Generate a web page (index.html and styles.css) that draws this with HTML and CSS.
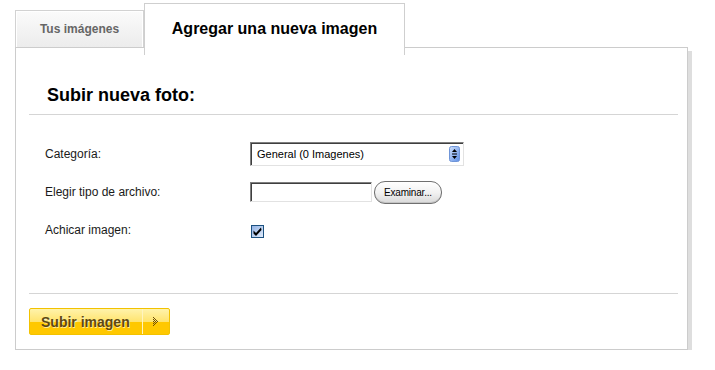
FILE: index.html
```html
<!DOCTYPE html>
<html lang="es">
<head>
    <meta charset="UTF-8">
    <title>Agregar una nueva imagen</title>
    <link rel="stylesheet" href="styles.css">
</head>
<body>

<div class="wrapper">
    <div class="tabs">
        <div class="tab">Tus imágenes</div>
        <div class="tab active">Agregar una nueva imagen</div>
    </div>

    <div class="panel">
        <h2 class="title">Subir nueva foto:</h2>

        <div class="form">
            <div class="row">
                <span class="label">Categoría:</span>
                <div class="select">
                    <span>General (0 Imagenes)</span>
                    <svg class="spin" width="11" height="16" viewBox="0 0 11 16">
                        <defs>
                            <linearGradient id="sg" x1="0" y1="0" x2="1" y2="1">
                                <stop offset="0" stop-color="#cfe0fb"/>
                                <stop offset="1" stop-color="#5d8ee6"/>
                            </linearGradient>
                        </defs>
                        <rect x="0.5" y="0.5" width="10" height="15" rx="2" fill="url(#sg)" stroke="#6f95d8"/>
                        <path d="M5.5 3 L8 6 L3 6 Z" fill="#000"/>
                        <rect x="3" y="7.5" width="5" height="1" fill="#000"/>
                        <path d="M3 10 L8 10 L5.5 13 Z" fill="#000"/>
                    </svg>
                </div>
            </div>
            <div class="row">
                <span class="label">Elegir tipo de archivo:</span>
                <div class="file-box"></div>
                <span class="browse">Examinar...</span>
            </div>
            <div class="row">
                <span class="label">Achicar imagen:</span>
                <svg class="check" width="13" height="13" viewBox="0 0 13 13">
                    <defs>
                        <linearGradient id="cg" x1="0" y1="0" x2="1" y2="1">
                            <stop offset="0" stop-color="#8fb0e4"/>
                            <stop offset="1" stop-color="#e4eefb"/>
                        </linearGradient>
                    </defs>
                    <rect x="0.5" y="0.5" width="12" height="12" fill="url(#cg)" stroke="#1c5180"/>
                    <path d="M2.5 5.5 L5 8 L10 2.5 L10.5 5 L5 11 L2.5 8.5 Z" fill="#000"/>
                </svg>
            </div>
        </div>

        <div class="footer">
            <button class="submit">
                <span class="submit-text">Subir imagen</span>
                <span class="submit-arrow">
                    <svg width="5" height="9" viewBox="0 0 5 9">
                        <rect x="0" y="0" width="1" height="1"/><rect x="0" y="2" width="1" height="1"/>
                        <rect x="0" y="4" width="1" height="1"/><rect x="0" y="6" width="1" height="1"/>
                        <rect x="0" y="8" width="1" height="1"/><rect x="1" y="1" width="1" height="1"/>
                        <rect x="1" y="3" width="1" height="1"/><rect x="1" y="5" width="1" height="1"/>
                        <rect x="1" y="7" width="1" height="1"/><rect x="2" y="2" width="1" height="1"/>
                        <rect x="2" y="4" width="1" height="1"/><rect x="2" y="6" width="1" height="1"/>
                        <rect x="3" y="3" width="1" height="1"/><rect x="3" y="5" width="1" height="1"/>
                        <rect x="4" y="4" width="1" height="1"/>
                    </svg>
                </span>
            </button>
        </div>
    </div>
</div>

</body>
</html>
```

FILE: styles.css
```css
body {
    margin: 0;
    background-color: #fff;
    font-family: "Liberation Sans", Arial, sans-serif;
    color: #1a1a1a;
}
.wrapper {
    width: 673px;
    margin-left: 15px;
    padding-top: 3px;
}
.tabs {
    display: flex;
    align-items: flex-start;
}
.tab {
    box-sizing: border-box;
    width: 129px;
    height: 37px;
    margin-top: 7px;
    padding-top: 11px;
    border: 1px solid #d2d2d2;
    border-bottom: none;
    box-shadow: inset 1px 1px 0 #fff, inset -1px 0 0 #fff;
    background: linear-gradient(#fbfbfb, #ececec);
    color: #666;
    font-size: 12px;
    font-weight: bold;
    line-height: 14px;
    text-align: center;
}
.tab.active {
    position: relative;
    z-index: 1;
    width: 261px;
    height: 52px;
    margin-top: 0;
    margin-bottom: -8px;
    padding-top: 16px;
    border-color: #cfcfcf;
    box-shadow: none;
    background: #fff;
    color: #000;
    font-size: 16px;
    line-height: 18px;
}
.panel {
    border: 1px solid #cccccc;
    box-shadow: 4px 4px 0 #dedede;
    background-color: #fff;
    padding: 0 9px 14px 13px;
}
.title {
    margin: 36px 0 0;
    padding: 0 0 8px 18px;
    border-bottom: 1px solid #d5d5d5;
    font-size: 18px;
    line-height: 22px;
    color: #000;
}
.form {
    margin-top: 27px;
    padding-left: 16px;
}
.row {
    display: flex;
    align-items: center;
    height: 24px;
    margin-bottom: 14px;
}
.row:last-child {
    margin-bottom: 0;
}
.label {
    width: 205px;
    font-size: 12px;
    line-height: 14px;
}
.select {
    box-sizing: border-box;
    display: flex;
    align-items: center;
    justify-content: space-between;
    width: 214px;
    height: 24px;
    padding: 0 3px 0 6px;
    border: 1px solid;
    border-color: #7f7f7f #e2e2e2 #e2e2e2 #7f7f7f;
    box-shadow: inset 1px 1px 0 #3f3f3f;
    font-size: 11px;
    color: #000;
}
.file-box {
    box-sizing: border-box;
    width: 122px;
    height: 20px;
    border: 1px solid;
    border-color: #7f7f7f #e2e2e2 #e2e2e2 #7f7f7f;
    box-shadow: inset 1px 1px 0 #3f3f3f;
}
.browse {
    box-sizing: border-box;
    display: flex;
    align-items: center;
    justify-content: center;
    width: 68px;
    height: 23px;
    margin-left: 2px;
    border: 1px solid #707070;
    border-radius: 11px;
    background: linear-gradient(#ffffff, #f2f2f2 50%, #d9d9d9);
    box-shadow: inset 0 -1px 0 #c4c4c4;
    font-size: 10px;
    letter-spacing: -0.2px;
    color: #000;
}
.check {
    display: block;
    margin: 2px 0 0 1px;
}
.footer {
    margin-top: 51px;
    padding-top: 14px;
    border-top: 1px solid #d5d5d5;
}
.submit {
    display: flex;
    align-items: stretch;
    width: 141px;
    height: 27px;
    padding: 0;
    border: 1px solid #f2c200;
    border-radius: 2px;
    background: linear-gradient(#fff3ab, #ffe46f 50%, #ffc800 50%, #ffc800);
    font-family: "Liberation Sans", Arial, sans-serif;
    cursor: pointer;
}
.submit-text {
    display: flex;
    align-items: center;
    width: 113px;
    padding-left: 11px;
    box-sizing: border-box;
    border-right: 1px solid #fff4c0;
    font-size: 14px;
    font-weight: bold;
    color: #5c4813;
    text-shadow: 1px 1px 0 rgba(255, 255, 255, 0.6);
}
.submit-arrow {
    display: flex;
    align-items: center;
    padding-left: 10px;
}
.submit-arrow svg {
    fill: #6b4e0c;
}
```
